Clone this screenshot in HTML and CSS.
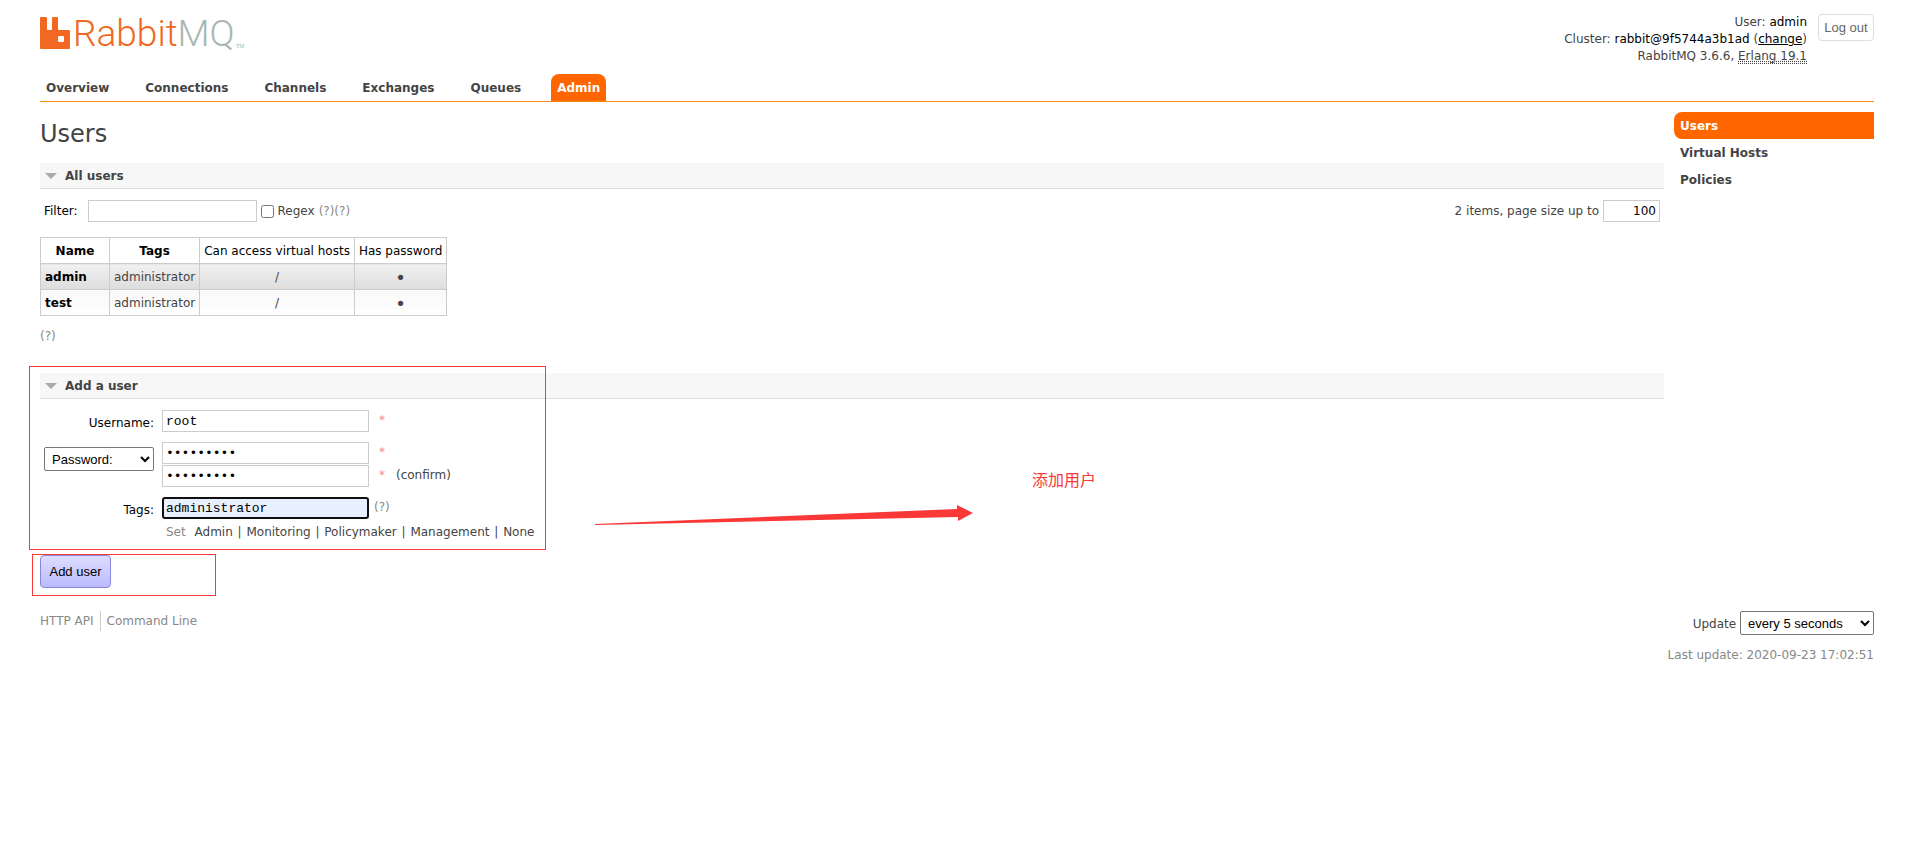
FILE: index.html
```html
<!DOCTYPE html>
<html lang="en">
  <head>
    <meta charset="UTF-8" />
    <meta name="viewport" content="width=device-width, initial-scale=1.0" />
    <title>RabbitMQ Management</title>
    <link rel="stylesheet" href="styles.css">
  </head>
  <body>
    <header>
      <div class="top">
        <a class="logo" href="#/">
          <svg width="30" height="32" viewBox="0 0 30 32">
            <path fill="#f26822" fill-rule="evenodd" d="M1 0h5q1 0 1 1v11q0 1 1 1h3q1 0 1-1V1q0-1 1-1h4q1 0 1 1v11q0 1 1 1h10q1 0 1 1v17q0 1-1 1H1q-1 0-1-1V1q0-1 1-1zM19 19q-1 0-1 1v4q0 1 1 1h4q1 0 1-1v-4q0-1-1-1z" />
          </svg>
          <span class="logo-text">Rabbit<span class="mq">MQ</span></span><span class="tm">TM</span>
        </a>
        <div class="login">
          <div class="login-details">
            <p>User: <b>admin</b></p>
            <p>Cluster: <b>rabbit@9f5744a3b1ad</b> (<a href="#/cluster-name">change</a>)</p>
            <p>RabbitMQ 3.6.6, <abbr title="Erlang version">Erlang 19.1</abbr></p>
          </div>
          <button type="button" class="logout">Log out</button>
        </div>
      </div>
      <nav>
        <ul class="tabs">
          <li><a href="#/">Overview</a></li>
          <li><a href="#/connections">Connections</a></li>
          <li><a href="#/channels">Channels</a></li>
          <li><a href="#/exchanges">Exchanges</a></li>
          <li><a href="#/queues">Queues</a></li>
          <li><a href="#/users" class="selected">Admin</a></li>
        </ul>
      </nav>
    </header>

    <div class="page">
      <main>
        <h1>Users</h1>

        <section>
          <h2>All users</h2>
          <div class="filter">
            <label class="filter-label" for="filter">Filter:</label>
            <input type="text" id="filter" class="filter-box" />
            <input type="checkbox" id="regex" />
            <label for="regex">Regex</label>
            <span class="help">(?)(?)</span>
            <label class="paging" for="pagesize">2 items, page size up to</label>
            <input type="text" id="pagesize" class="pagesize" value="100" />
          </div>
          <table class="list">
            <thead>
              <tr>
                <th><b>Name</b></th>
                <th><b>Tags</b></th>
                <th>Can access virtual hosts</th>
                <th>Has password</th>
              </tr>
            </thead>
            <tbody>
              <tr class="alt">
                <td><a href="#/users/admin">admin</a></td>
                <td>administrator</td>
                <td class="c">/</td>
                <td class="c dot">•</td>
              </tr>
              <tr>
                <td><a href="#/users/test">test</a></td>
                <td>administrator</td>
                <td class="c">/</td>
                <td class="c dot">•</td>
              </tr>
            </tbody>
          </table>
          <p class="help below">(?)</p>
        </section>

        <section class="add">
          <h2>Add a user</h2>
          <form>
            <div class="fields">
              <label for="username">Username:</label>
              <div class="cell">
                <input type="text" id="username" value="root" />
                <span class="mand">*</span>
              </div>

              <select aria-label="Password type">
                <option>Password:</option>
                <option>No password</option>
              </select>
              <div>
                <div class="cell">
                  <input type="password" aria-label="Password" value="123456789" />
                  <span class="mand">*</span>
                </div>
                <div class="cell">
                  <input type="password" aria-label="Confirm password" value="123456789" />
                  <span class="mand">*</span>
                  <span>(confirm)</span>
                </div>
              </div>

              <label for="tags">Tags:</label>
              <div>
                <div class="cell">
                  <input type="text" id="tags" class="focused" value="administrator" />
                  <span class="help">(?)</span>
                </div>
                <p class="set"><span class="help">Set</span> <a href="#">Admin</a> | <a href="#">Monitoring</a> | <a href="#">Policymaker</a> | <a href="#">Management</a> | <a href="#">None</a></p>
              </div>
            </div>
            <button type="submit" class="submit">Add user</button>
          </form>

          <div class="mark mark-form"></div>
          <div class="mark mark-button"></div>
          <svg class="arrow" width="378" height="20" viewBox="0 0 378 20">
            <path fill="#fb3838" d="M0 19L362 4V0L378 8L363 16V12L0 20z" />
          </svg>
          <p class="note">添加用户</p>
        </section>
      </main>

      <aside>
        <ul class="side">
          <li><a href="#/users" class="selected">Users</a></li>
          <li><a href="#/vhosts">Virtual Hosts</a></li>
          <li><a href="#/policies">Policies</a></li>
        </ul>
      </aside>
    </div>

    <footer>
      <ul class="links">
        <li><a href="api/">HTTP API</a></li>
        <li><a href="cli/">Command Line</a></li>
      </ul>
      <div class="update">
        <label for="update-every">Update</label>
        <select id="update-every">
          <option>every 5 seconds</option>
          <option>every 30 seconds</option>
        </select>
        <p>Last update: 2020-09-23 17:02:51</p>
      </div>
    </footer>
  </body>
</html>
```
FILE: styles.css
```css
* {
  box-sizing: border-box;
}

body {
  font: 12px/17px Verdana, "DejaVu Sans", "Noto Sans CJK SC", sans-serif;
  color: #444;
  background: #fff;
  margin: 0;
  padding: 12px 37px 0 40px;
}

h1, h2, p, ul {
  margin: 0;
  padding: 0;
  font-weight: normal;
}

ul {
  list-style: none;
}

a {
  color: #444;
  text-decoration: none;
}

input, select, button {
  margin: 0;
}

/* header */

.top {
  display: flex;
  justify-content: space-between;
  height: 62px;
}

.logo {
  display: flex;
  align-items: flex-start;
  padding-top: 5px;
}

.logo-text {
  margin-left: 3px;
  font: 300 37px/34px Roboto, sans-serif;
  color: #f26822;
}

.mq {
  color: #a9b7b0;
}

.tm {
  align-self: flex-end;
  font: 6px/8px "Liberation Sans", sans-serif;
  color: #a9b7b0;
  margin: 0 0 24px 1px;
}

.login {
  display: flex;
  align-items: flex-start;
  gap: 11px;
  padding-top: 2px;
}

.login-details {
  text-align: right;
}

.login b {
  font-weight: normal;
  color: #000;
}

.login a {
  color: #000;
  text-decoration: underline;
}

abbr {
  text-decoration: underline dotted;
  border-bottom: 1px dotted #444;
}

.logout {
  height: 27px;
  width: 56px;
  padding: 0;
  border: 1px solid #ddd;
  border-radius: 4px;
  background: #fff;
  font: 13px "Liberation Sans", sans-serif;
  color: #666;
}

.tabs {
  display: flex;
  gap: 24px;
  border-bottom: 1px solid #f88b12;
}

.tabs a,
.side a {
  display: block;
  padding: 6px 6px 4px;
  font-weight: bold;
}

.tabs a {
  border-radius: 8px 8px 0 0;
}

.side a {
  border-radius: 8px 0 0 8px;
}

.tabs .selected,
.side .selected {
  color: #fff;
  background: #f60;
}

/* page */

.page {
  display: flex;
  gap: 10px;
}

main {
  flex: 1;
}

aside {
  width: 200px;
  padding-top: 10px;
}

h1 {
  font-size: 24px;
  line-height: 30px;
  padding: 17px 0 14px;
}

h2 {
  display: flex;
  align-items: center;
  gap: 8px;
  height: 26px;
  padding: 1px 0 0 5px;
  font-size: 12px;
  font-weight: bold;
  background: #f7f7f7;
  border-bottom: 1px solid #ddd;
}

h2::before {
  content: "";
  border: 6px solid transparent;
  border-top-color: #aaa;
  border-bottom: 0;
}

input[type="text"],
input[type="password"] {
  height: 22px;
  padding: 2px 3px;
  border: 1px solid #ccc;
}

.help {
  color: #888;
}

.filter {
  display: flex;
  align-items: center;
  gap: 4px;
  padding: 11px 4px 15px;
}

.filter-label {
  color: #000;
  margin-right: 6px;
}

.filter-box {
  width: 169px;
}

.paging {
  margin-left: auto;
}

.filter .pagesize {
  width: 57px;
  font: inherit;
  text-align: right;
}

.list {
  border-collapse: collapse;
}

.list th,
.list td {
  height: 26px;
  padding: 5px 4px 3px;
  border: 1px solid #ccc;
}

.list th {
  color: #000;
  font-weight: normal;
}

.list th:first-child {
  min-width: 69px;
}

.list td {
  background: linear-gradient(#f8f8f8, #fff);
}

.list .alt td {
  background: linear-gradient(#f0f0f0, #ddd);
}

.list td a {
  color: #000;
  font-weight: bold;
}

.list .c {
  text-align: center;
}

.list .dot {
  font-size: 18px;
}

.below {
  padding: 12px 0 28px;
}

/* add user form */

.add {
  position: relative;
}

.fields {
  display: grid;
  grid-template-columns: 110px 1fr;
  column-gap: 8px;
  row-gap: 9px;
  padding: 11px 0 0 4px;
}

.fields > label {
  color: #000;
  text-align: right;
  padding-top: 5px;
}

.cell {
  display: flex;
  gap: 10px;
  height: 23px;
  line-height: 21px;
}

.cell input {
  width: 207px;
  font: 13px "Liberation Mono", monospace;
}

.mand {
  width: 7px;
  color: #f88;
}

.fields .focused {
  padding: 1px 2px;
  border: 2px solid #101010;
  border-radius: 3px;
  background: #e8f0fe;
}

.focused + .help {
  margin-left: -5px;
}

select {
  height: 24px;
  padding: 0 3px;
  border: 1px solid #767676;
  border-radius: 2px;
  background-color: #fff;
  font: 13px "Liberation Sans", sans-serif;
  color: #000;
}

.fields select {
  margin-top: 5px;
}

.set {
  padding: 4px;
}

.set a {
  padding: 0 1px;
}

.set .help {
  margin-right: 4px;
}

.submit {
  margin-top: 10px;
  width: 71px;
  height: 33px;
  padding: 0;
  border: 1px solid #8888dd;
  border-radius: 4px;
  background: linear-gradient(#ddf, #bbf);
  font: 13px "Liberation Sans", sans-serif;
  color: #000;
}

/* annotations laid over the form */

.mark {
  position: absolute;
  border: 1px solid #fb3838;
  pointer-events: none;
}

.mark-form {
  left: -11px;
  top: -7px;
  width: 517px;
  height: 184px;
}

.mark-button {
  left: -8px;
  top: 181px;
  width: 184px;
  height: 42px;
}

.arrow {
  position: absolute;
  left: 555px;
  top: 132px;
}

.note {
  position: absolute;
  left: 992px;
  top: 96px;
  font-size: 16px;
  line-height: 24px;
  color: #fb3838;
}

/* footer */

footer {
  display: flex;
  justify-content: space-between;
  align-items: flex-start;
  padding-top: 23px;
}

.links {
  display: flex;
}

.links a {
  display: block;
  line-height: 20px;
  color: #888;
}

.links li + li {
  margin-left: 6px;
  padding-left: 6px;
  border-left: 1px solid #ccc;
}

.update {
  text-align: right;
}

.update select {
  width: 134px;
}

.update p {
  padding-top: 12px;
  color: #888;
}
```
